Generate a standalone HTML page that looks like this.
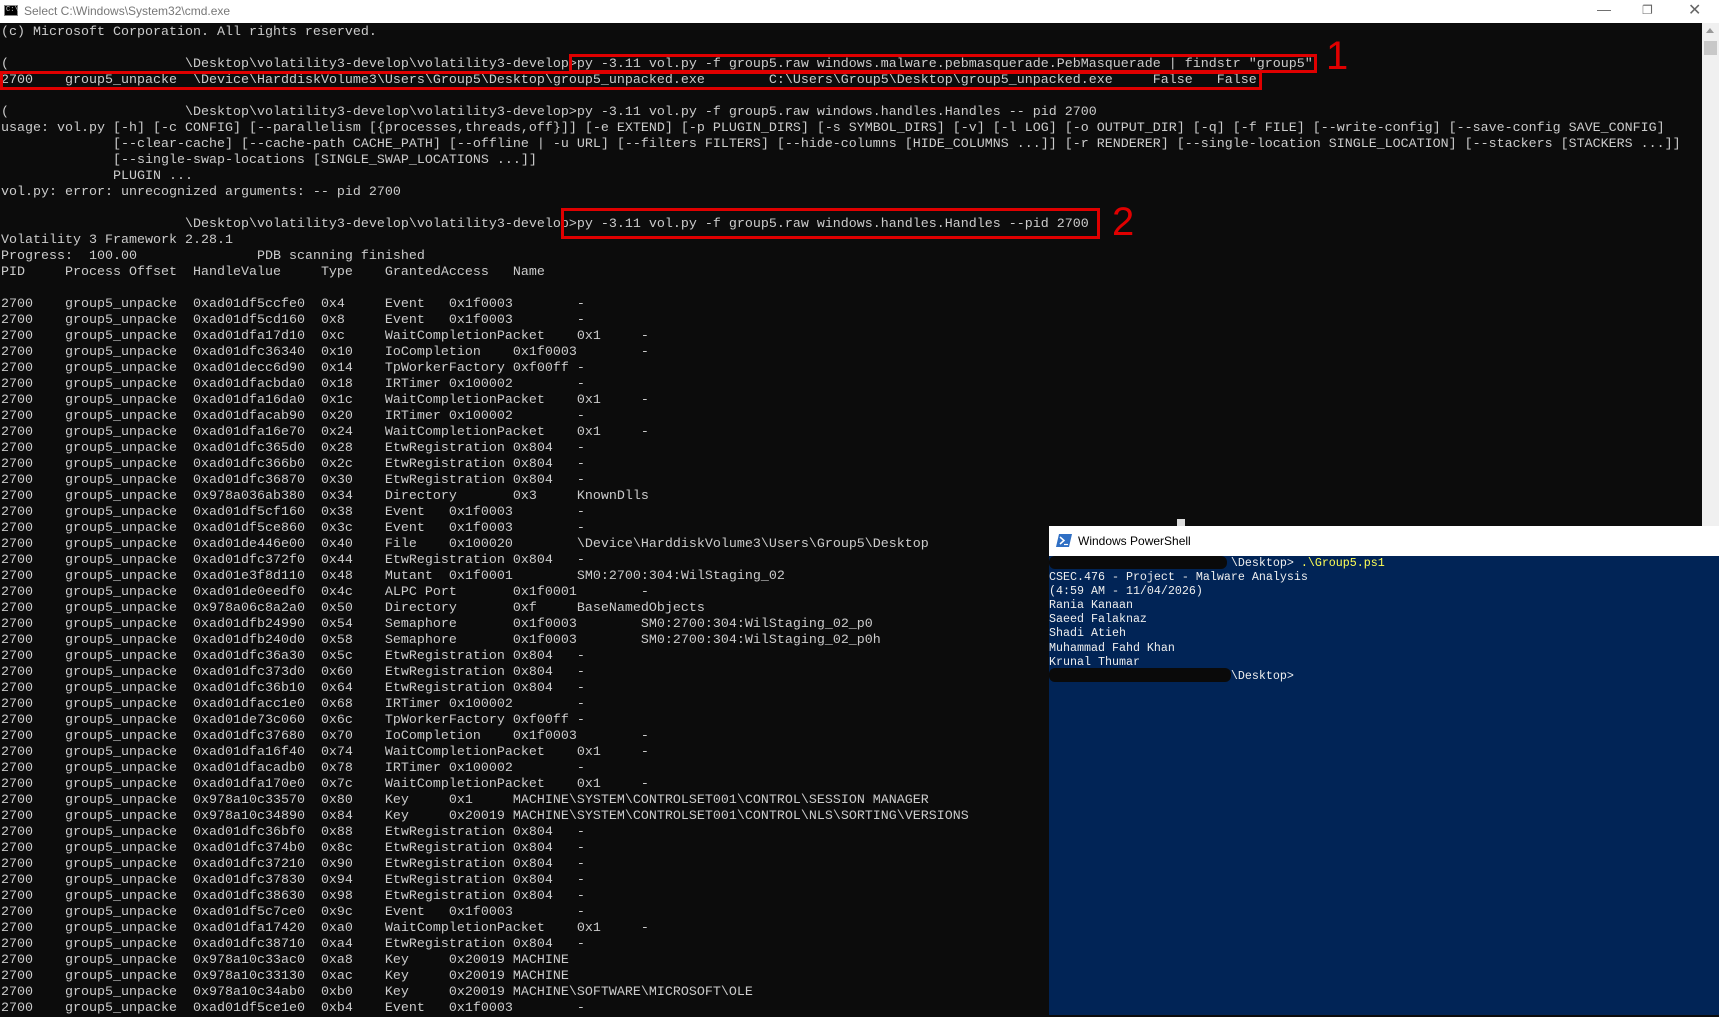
<!DOCTYPE html>
<html><head><meta charset="utf-8"><style>
*{margin:0;padding:0;box-sizing:border-box}
body{width:1719px;height:1015px;overflow:hidden;background:#0c0c0c;position:relative;font-family:"Liberation Mono",monospace}
#title{position:absolute;left:0;top:0;width:1719px;height:23px;background:#fff;font:12px "Liberation Sans",sans-serif;color:#777;}
#title .ic{position:absolute;left:4px;top:5px;width:14px;height:11px;background:#000;border:1px solid #888;color:#ccc;font:7px "Liberation Mono",monospace;line-height:9px;padding-left:1px}
#title .t{position:absolute;left:24px;top:4px}
#title .c{position:absolute;top:1px;color:#666;font-size:14px}
pre#cmd{position:absolute;left:1px;top:25px;font-size:13.33px;line-height:16px;color:#cccccc;tab-size:8;-moz-tab-size:8;white-space:pre;font-family:"Liberation Mono",monospace}
.blob{position:absolute;background:#000;border-radius:6px}
.box{position:absolute;border:3px solid #e00000}
.num{position:absolute;color:#e00000;font:40px "Liberation Sans",sans-serif}
#sb{position:absolute;left:1702px;top:23px;width:17px;height:503px;background:#f0f0f0}
#ps{position:absolute;left:1049px;top:526px;width:670px;height:489px;background:#012456}
#ps .tb{height:30px;background:#fff;font:12px "Liberation Sans",sans-serif;color:#000;position:relative}
#ps pre{position:absolute;left:0;top:30px;font-size:11.67px;line-height:14.1px;color:#eee;font-family:"Liberation Mono",monospace}
</style></head><body>
<div id="title"><div class="ic">C:\</div><div class="t">Select C:\Windows\System32\cmd.exe</div>
<div class="c" style="left:1597px">&#8212;</div><div class="c" style="left:1642px;font-size:12px;top:3px">&#10064;</div><div class="c" style="left:1688px;font-size:16px;top:0">&#10005;</div></div>
<pre id="cmd">(c) Microsoft Corporation. All rights reserved.

(                      \Desktop\volatility3-develop\volatility3-develop>py -3.11 vol.py -f group5.raw windows.malware.pebmasquerade.PebMasquerade | findstr "group5"
2700	group5_unpacke	\Device\HarddiskVolume3\Users\Group5\Desktop\group5_unpacked.exe	C:\Users\Group5\Desktop\group5_unpacked.exe	False	False

(                      \Desktop\volatility3-develop\volatility3-develop>py -3.11 vol.py -f group5.raw windows.handles.Handles -- pid 2700
usage: vol.py [-h] [-c CONFIG] [--parallelism [{processes,threads,off}]] [-e EXTEND] [-p PLUGIN_DIRS] [-s SYMBOL_DIRS] [-v] [-l LOG] [-o OUTPUT_DIR] [-q] [-f FILE] [--write-config] [--save-config SAVE_CONFIG]
              [--clear-cache] [--cache-path CACHE_PATH] [--offline | -u URL] [--filters FILTERS] [--hide-columns [HIDE_COLUMNS ...]] [-r RENDERER] [--single-location SINGLE_LOCATION] [--stackers [STACKERS ...]]
              [--single-swap-locations [SINGLE_SWAP_LOCATIONS ...]]
              PLUGIN ...
vol.py: error: unrecognized arguments: -- pid 2700

                       \Desktop\volatility3-develop\volatility3-develop>py -3.11 vol.py -f group5.raw windows.handles.Handles --pid 2700
Volatility 3 Framework 2.28.1
Progress:  100.00		PDB scanning finished
PID	Process Offset	HandleValue	Type	GrantedAccess	Name

2700	group5_unpacke	0xad01df5ccfe0	0x4	Event	0x1f0003	-
2700	group5_unpacke	0xad01df5cd160	0x8	Event	0x1f0003	-
2700	group5_unpacke	0xad01dfa17d10	0xc	WaitCompletionPacket	0x1	-
2700	group5_unpacke	0xad01dfc36340	0x10	IoCompletion	0x1f0003	-
2700	group5_unpacke	0xad01decc6d90	0x14	TpWorkerFactory	0xf00ff	-
2700	group5_unpacke	0xad01dfacbda0	0x18	IRTimer	0x100002	-
2700	group5_unpacke	0xad01dfa16da0	0x1c	WaitCompletionPacket	0x1	-
2700	group5_unpacke	0xad01dfacab90	0x20	IRTimer	0x100002	-
2700	group5_unpacke	0xad01dfa16e70	0x24	WaitCompletionPacket	0x1	-
2700	group5_unpacke	0xad01dfc365d0	0x28	EtwRegistration	0x804	-
2700	group5_unpacke	0xad01dfc366b0	0x2c	EtwRegistration	0x804	-
2700	group5_unpacke	0xad01dfc36870	0x30	EtwRegistration	0x804	-
2700	group5_unpacke	0x978a036ab380	0x34	Directory	0x3	KnownDlls
2700	group5_unpacke	0xad01df5cf160	0x38	Event	0x1f0003	-
2700	group5_unpacke	0xad01df5ce860	0x3c	Event	0x1f0003	-
2700	group5_unpacke	0xad01de446e00	0x40	File	0x100020	\Device\HarddiskVolume3\Users\Group5\Desktop
2700	group5_unpacke	0xad01dfc372f0	0x44	EtwRegistration	0x804	-
2700	group5_unpacke	0xad01e3f8d110	0x48	Mutant	0x1f0001	SM0:2700:304:WilStaging_02
2700	group5_unpacke	0xad01de0eedf0	0x4c	ALPC Port	0x1f0001	-
2700	group5_unpacke	0x978a06c8a2a0	0x50	Directory	0xf	BaseNamedObjects
2700	group5_unpacke	0xad01dfb24990	0x54	Semaphore	0x1f0003	SM0:2700:304:WilStaging_02_p0
2700	group5_unpacke	0xad01dfb240d0	0x58	Semaphore	0x1f0003	SM0:2700:304:WilStaging_02_p0h
2700	group5_unpacke	0xad01dfc36a30	0x5c	EtwRegistration	0x804	-
2700	group5_unpacke	0xad01dfc373d0	0x60	EtwRegistration	0x804	-
2700	group5_unpacke	0xad01dfc36b10	0x64	EtwRegistration	0x804	-
2700	group5_unpacke	0xad01dfacc1e0	0x68	IRTimer	0x100002	-
2700	group5_unpacke	0xad01de73c060	0x6c	TpWorkerFactory	0xf00ff	-
2700	group5_unpacke	0xad01dfc37680	0x70	IoCompletion	0x1f0003	-
2700	group5_unpacke	0xad01dfa16f40	0x74	WaitCompletionPacket	0x1	-
2700	group5_unpacke	0xad01dfacadb0	0x78	IRTimer	0x100002	-
2700	group5_unpacke	0xad01dfa170e0	0x7c	WaitCompletionPacket	0x1	-
2700	group5_unpacke	0x978a10c33570	0x80	Key	0x1	MACHINE\SYSTEM\CONTROLSET001\CONTROL\SESSION MANAGER
2700	group5_unpacke	0x978a10c34890	0x84	Key	0x20019	MACHINE\SYSTEM\CONTROLSET001\CONTROL\NLS\SORTING\VERSIONS
2700	group5_unpacke	0xad01dfc36bf0	0x88	EtwRegistration	0x804	-
2700	group5_unpacke	0xad01dfc374b0	0x8c	EtwRegistration	0x804	-
2700	group5_unpacke	0xad01dfc37210	0x90	EtwRegistration	0x804	-
2700	group5_unpacke	0xad01dfc37830	0x94	EtwRegistration	0x804	-
2700	group5_unpacke	0xad01dfc38630	0x98	EtwRegistration	0x804	-
2700	group5_unpacke	0xad01df5c7ce0	0x9c	Event	0x1f0003	-
2700	group5_unpacke	0xad01dfa17420	0xa0	WaitCompletionPacket	0x1	-
2700	group5_unpacke	0xad01dfc38710	0xa4	EtwRegistration	0x804	-
2700	group5_unpacke	0x978a10c33ac0	0xa8	Key	0x20019	MACHINE
2700	group5_unpacke	0x978a10c33130	0xac	Key	0x20019	MACHINE
2700	group5_unpacke	0x978a10c34ab0	0xb0	Key	0x20019	MACHINE\SOFTWARE\MICROSOFT\OLE
2700	group5_unpacke	0xad01df5ce1e0	0xb4	Event	0x1f0003	-
</pre>
<div class="box" style="left:569px;top:54px;width:748px;height:19px"></div>
<div class="box" style="left:0;top:71px;width:1262px;height:19px"></div>
<div class="num" style="left:1326px;top:34px">1</div>
<div class="box" style="left:561px;top:208px;width:539px;height:31px"></div>
<div class="num" style="left:1112px;top:200px">2</div>
<div id="sb"><div style="position:absolute;left:4px;top:5px;width:0;height:0;border-left:4px solid transparent;border-right:4px solid transparent;border-bottom:5px solid #999"></div><div style="position:absolute;left:2px;top:18px;width:13px;height:14px;background:#c8c8c8"></div></div>
<div style="position:absolute;left:1177px;top:519px;width:8px;height:8px;background:#ddd"></div>
<div id="ps"><div class="tb"><svg style="position:absolute;left:7px;top:8px" width="16" height="13"><polygon points="3,0 16,0 13,13 0,13" fill="#2f6fc4"/><polyline points="4,3 8,6.5 4,10" stroke="#fff" stroke-width="1.5" fill="none"/><line x1="8" y1="10.5" x2="12" y2="10.5" stroke="#fff" stroke-width="1.2"/></svg><span style="position:absolute;left:29px;top:8px">Windows PowerShell</span></div>
<pre>                          \Desktop&gt; <span style="color:#ffff55">.\Group5.ps1</span>
CSEC.476 - Project - Malware Analysis
(4:59 AM - 11/04/2026)
Rania Kanaan
Saeed Falaknaz
Shadi Atieh
Muhammad Fahd Khan
Krunal Thumar
                          \Desktop&gt;</pre>
<div class="blob" style="left:0px;top:30px;width:178px;height:13px;background:#0a0a0a"></div>
<div class="blob" style="left:0px;top:142px;width:182px;height:14px;background:#0a0a0a"></div>
</div>
</body></html>
